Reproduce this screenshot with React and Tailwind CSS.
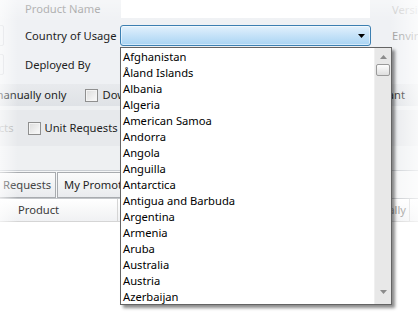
import React from "react";

const COUNTRIES = [
  "Afghanistan",
  "Åland Islands",
  "Albania",
  "Algeria",
  "American Samoa",
  "Andorra",
  "Angola",
  "Anguilla",
  "Antarctica",
  "Antigua and Barbuda",
  "Argentina",
  "Armenia",
  "Aruba",
  "Australia",
  "Austria",
  "Azerbaijan",
];

function CheckBox() {
  return (
    <span className="inline-block shrink-0 w-[13px] h-[13px] border border-[#8f8f8f] bg-gradient-to-br from-[#dcdcdc] to-[#fbfbfb] shadow-[inset_0_0_0_1px_#f4f4f4]" />
  );
}

function CountryPopup() {
  return (
    <div className="absolute left-[120px] top-[47px] w-[272px] h-[258px] border border-[#646464] bg-white flex shadow-[3px_3px_3px_rgba(0,0,0,0.45)]">
      <ul className="flex-1 pt-[1px] pl-[2px] text-black">
        {COUNTRIES.map((c) => (
          <li key={c} className="h-[16px] leading-[16px] whitespace-nowrap">
            {c}
          </li>
        ))}
      </ul>
      <div className="w-[17px] bg-[#e8e8e8] border-l border-[#f0f0f0] flex flex-col items-center">
        <svg width="7" height="4" viewBox="0 0 7 4" className="mt-[7px]">
          <path d="M0 4 L3.5 0 L7 4 Z" fill="#8c8c8c" />
        </svg>
        <div className="mt-[5px] w-[14px] h-[12px] rounded-[2px] border border-[#9a9a9a] bg-gradient-to-b from-[#fdfdfd] to-[#dedede]" />
        <div className="flex-1" />
        <svg width="7" height="4" viewBox="0 0 7 4" className="mb-[10px]">
          <path d="M0 0 L3.5 4 L7 0 Z" fill="#8c8c8c" />
        </svg>
      </div>
    </div>
  );
}

export default function App() {
  return (
    <div className="relative w-[418px] h-[331px] overflow-hidden bg-white font-['Noto_Sans',sans-serif] text-[11.2px] text-[#1e1e1e] whitespace-nowrap">
      {/* background form */}
      <div className="flex flex-col">
        <div className="bg-[#eff1f4] flex flex-col">
          <div className="flex h-[22px]">
            <div className="shrink-0 w-[121px] pl-[25px] pt-[1px] leading-[16px] text-[#9c9c9c]">Product Name</div>
            <div className="shrink-0 w-[249px] h-[18px] bg-white" />
            <div className="shrink-0 pl-[22px] pt-[2px] leading-[16px] text-[#c4c4c4]">Version</div>
          </div>
          <div className="flex h-[21px] mt-[3px] items-center">
            <div className="relative shrink-0 w-[120px] pl-[25px] leading-[16px]">
              <span className="absolute left-[-8px] top-[-3px] w-[12px] h-[21px] rounded-[2px] border border-[#d6d9de]" />
              Country of Usage
            </div>
            <div className="shrink-0 w-[251px] h-[21px] rounded-[3px] border border-[#3c7fb1] bg-gradient-to-b from-[#e3f1fc] via-[#c5e2f8] to-[#a9d4f3] shadow-[inset_0_0_0_1px_rgba(255,255,255,0.5)] flex items-center justify-end pr-[5px]">
              <svg width="7" height="4" viewBox="0 0 7 4">
                <path d="M0 0 L3.5 4 L7 0 Z" fill="#000" />
              </svg>
            </div>
            <div className="shrink-0 pl-[21px] leading-[16px] text-[#9a9a9a]">Environment</div>
          </div>
          <div className="flex h-[22px] mt-[8px] items-center">
            <div className="relative shrink-0 w-[120px] pl-[25px] leading-[16px]">
              <span className="absolute left-[-8px] top-[-3px] w-[12px] h-[21px] rounded-[2px] border border-[#d6d9de]" />
              Deployed By
            </div>
          </div>
          <div className="h-[8px]" />
        </div>
        <div className="h-[22px] bg-gradient-to-b from-[#e8eaed] to-[#dfe2e6] flex items-center">
          <span className="shrink-0 ml-[-7px] leading-[16px]">manually only</span>
          <span className="shrink-0 ml-[18px] flex"><CheckBox /></span>
          <span className="shrink-0 ml-[5px] leading-[16px]">Download</span>
          <span className="flex-1" />
          <span className="shrink-0 mr-[13px] leading-[16px]">Relevant</span>
        </div>
        <div className="h-[4px] bg-[#eef0f2]" />
        <div className="h-[36px] bg-[#e7e9ec] flex items-center">
          <span className="shrink-0 ml-[-33px] leading-[16px] text-[#b4b4b4]">Products</span>
          <span className="shrink-0 ml-[14px] flex"><CheckBox /></span>
          <span className="shrink-0 ml-[4px] leading-[16px]">Unit Requests</span>
        </div>
        <div className="h-[25px] bg-[#eef0f2] border-b border-[#c9cdd2]" />
        <div className="h-[28px] pt-[1px] flex items-stretch bg-[#f5f6f7] border-b border-[#c3c6ca]">
          <div className="shrink-0 w-[56px] pl-[3px] flex items-center border-r border-y border-[#a8abaf] bg-gradient-to-b from-[#fbfbfb] to-[#e9ebee] leading-[16px] text-[#444]">
            Requests
          </div>
          <div className="shrink-0 ml-[1px] pl-[6px] w-[120px] flex items-center border border-[#a8abaf] bg-gradient-to-b from-[#fbfbfb] to-[#e9ebee] leading-[16px]">
            My Promotions
          </div>
        </div>
        <div className="h-[23px] flex items-center bg-gradient-to-b from-[#ffffff] to-[#f0f1f3] border-b border-[#d5d5d5]">
          <div className="shrink-0 w-[118px] pl-[18px] leading-[16px] text-[#3a3a3a] border-r border-[#d5d5d5] h-full flex items-center">
            Product
          </div>
          <div className="flex-1" />
          <div className="shrink-0 pr-[3px] leading-[16px] text-[#8a8a8a] border-r border-[#d5d5d5] h-full flex items-center">
            Manually
          </div>
          <div className="shrink-0 w-[8px]" />
        </div>
        <div className="flex-1 bg-white" />
      </div>

      {/* soft fade on the capture edges */}
      <div className="pointer-events-none absolute inset-y-0 left-0 w-[18px] bg-gradient-to-r from-white/60 to-transparent" />
      <div className="pointer-events-none absolute inset-x-0 top-0 h-[22px] bg-gradient-to-b from-white/40 to-transparent" />
      <div className="pointer-events-none absolute inset-y-0 right-0 w-[28px] bg-gradient-to-l from-white/70 to-transparent" />

      <CountryPopup />
    </div>
  );
}
